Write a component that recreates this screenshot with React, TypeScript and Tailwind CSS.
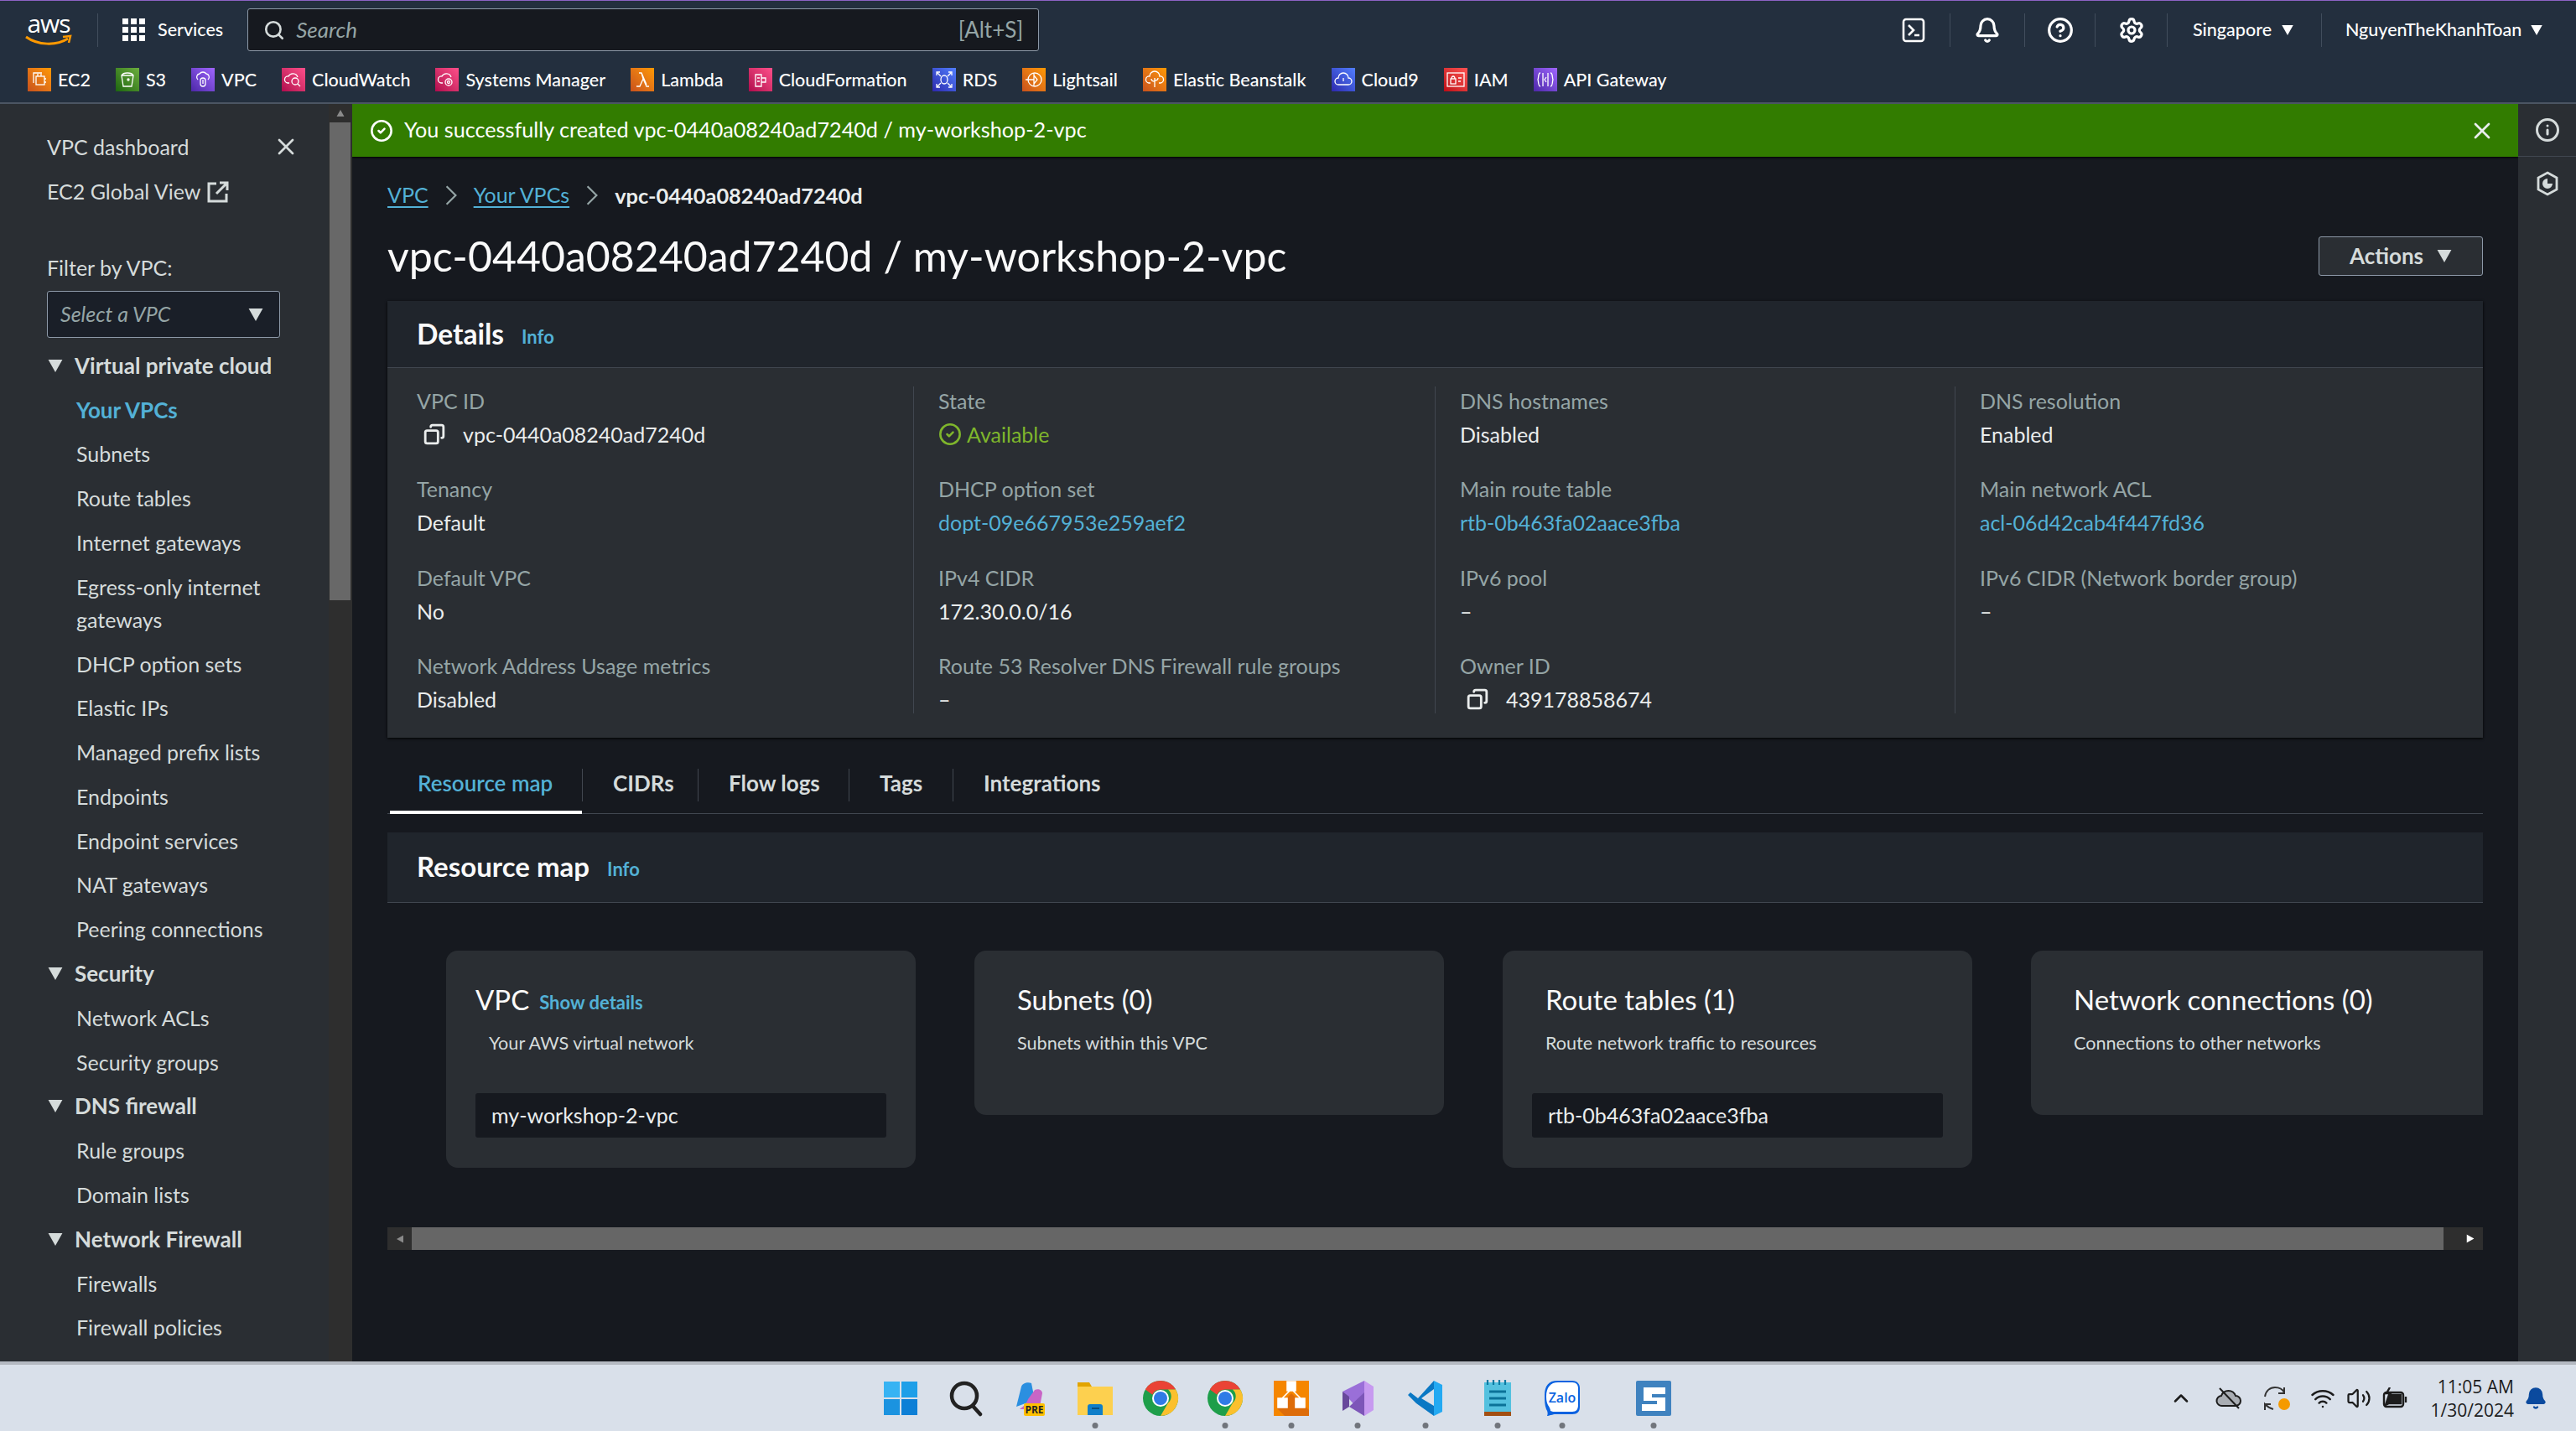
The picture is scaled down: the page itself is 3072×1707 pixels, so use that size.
import { Bell, ChevronUp, CircleCheck, CircleHelp, Copy, Info, Search, Settings, Volume2, Wifi, X } from "lucide-react";
import type { ReactNode } from "react";

function Caret({ className = "" }: { className?: string }) {
  return (
    <svg viewBox="0 0 18 16" className={className}>
      <path d="M0 0h18L9 16z" fill="currentColor" />
    </svg>
  );
}

function Svc({ bg, children }: { bg: string; children: ReactNode }) {
  return (
    <span className={`w-[28px] h-[28px] shrink-0 ${bg}`}>
      <svg viewBox="0 0 28 28" className="w-full h-full" fill="none" stroke="#fff" strokeWidth="1.3">
        {children}
      </svg>
    </span>
  );
}

const favorites: [string, string, ReactNode][] = [
  ["EC2", "bg-gradient-to-tr from-[#c8511b] to-[#ff9900]", <><rect x="10" y="10" width="10" height="10" /><path d="M7 18V6h10M12 7v3M16 7v3M22 13h-2M22 17h-2" /></>],
  ["S3", "bg-gradient-to-tr from-[#1b660f] to-[#6cae3e]", <><path d="M7 9h14l-2 13H9zM7 9c2-4 12-4 14 0" /><circle cx="15" cy="14" r="1" /></>],
  ["VPC", "bg-gradient-to-tr from-[#4d27a8] to-[#a166ff]", <><path d="M8 14a4 4 0 0 1 2-7 5 5 0 0 1 8 0 4 4 0 0 1 2 7" /><rect x="11" y="12" width="6" height="10" rx="3" /><path d="M14 14v5" /></>],
  ["CloudWatch", "bg-gradient-to-tr from-[#b0084d] to-[#ff4f8b]", <><path d="M9 18H7a4 4 0 0 1 1-8 6 6 0 0 1 11 1" /><circle cx="16" cy="16" r="4" /><path d="m19 19 3 3" /></>],
  ["Systems Manager", "bg-gradient-to-tr from-[#b0084d] to-[#ff4f8b]", <><path d="M9 18H7a4 4 0 0 1 1-8 6 6 0 0 1 11 1" /><circle cx="16" cy="17" r="4" /><circle cx="16" cy="17" r="1.5" /></>],
  ["Lambda", "bg-gradient-to-tr from-[#c8511b] to-[#ff9900]", <path d="M7 22h4l4-9 4 9h3M10 6h3l6 14M15 13l-2-7" />],
  ["CloudFormation", "bg-gradient-to-tr from-[#b0084d] to-[#ff4f8b]", <><path d="M8 8h7v14H8zM15 12h5v5h-5M10 12h3M10 16h3" /></>],
  ["RDS", "bg-gradient-to-tr from-[#2e27ad] to-[#527fff]", <><ellipse cx="14" cy="14" rx="4" ry="5" /><path d="M5 9V5h4M23 9V5h-4M5 19v4h4M23 19v4h-4M6 6l4 4M22 6l-4 4M6 22l4-4M22 22l-4-4" /></>],
  ["Lightsail", "bg-gradient-to-tr from-[#c8511b] to-[#ff9900]", <><circle cx="15" cy="14" r="8" /><path d="M14 7v14M4 14h10M14 9l4 5-4 5" /></>],
  ["Elastic Beanstalk", "bg-gradient-to-tr from-[#c8511b] to-[#ff9900]", <><path d="M9 18H7a4 4 0 0 1 1-8 6 6 0 0 1 12 0 4 4 0 0 1 1 8h-2" /><path d="M14 23V12M14 16c-3 0-4-1-4-3M14 15c3 0 4-1 4-3" /></>],
  ["Cloud9", "bg-gradient-to-tr from-[#2e27ad] to-[#527fff]", <path d="M8 20a4 4 0 0 1 0-8 6 6 0 0 1 12 0 4 4 0 0 1 0 8zM14 12v4" />],
  ["IAM", "bg-gradient-to-tr from-[#bd0816] to-[#ff5252]", <><rect x="4" y="6" width="20" height="16" /><rect x="8" y="13" width="6" height="6" /><path d="M9 13c0-4 4-4 4 0M17 12h4M17 16h3" /></>],
  ["API Gateway", "bg-gradient-to-tr from-[#4d27a8] to-[#a166ff]", <><path d="M8 6C5 6 6 12 5 14c1 2 0 8 3 8M20 6c3 0 2 6 3 8-1 2 0 8-3 8M11 6v16M17 6v16M15 11l-2 3 2 3" /></>],
];

function TopBar() {
  return (
    <header className="bg-[#232f3e] h-[122px] shrink-0 border-t-[1px] border-t-[#8c62c4] text-white">
      <div className="flex items-center h-[69px]">
        <div className="ml-[30px] w-[56px] h-[42px] relative shrink-0">
          <span className="block text-[30px] leading-[26px] tracking-[-1px] font-[500] text-white [font-family:'Open_Sans',sans-serif] text-center">aws</span>
          <svg viewBox="0 0 56 16" className="absolute left-0 bottom-0 w-[56px] h-[16px]">
            <path d="M1 3c14 10 36 11 50 2" fill="none" stroke="#ff9900" strokeWidth="3" />
            <path d="M45 3l9-1-2 8" fill="none" stroke="#ff9900" strokeWidth="2.5" />
          </svg>
        </div>
        <div className="w-[1px] h-[40px] bg-[#414d5c] ml-[30px]" />
        <svg viewBox="0 0 27 27" className="w-[27px] h-[27px] ml-[29px] text-white" fill="currentColor">
          <path d="M0 0h7v7H0zM10 0h7v7h-7zM20 0h7v7h-7zM0 10h7v7H0zM10 10h7v7h-7zM20 10h7v7h-7zM0 20h7v7H0zM10 20h7v7h-7zM20 20h7v7h-7z" />
        </svg>
        <span className="ml-[15px] text-[21.5px] font-medium">Services</span>
        <div className="ml-[29px] w-[944px] h-[51px] rounded-[3px] border-[1px] border-[#8d99a8] bg-[#16191f] flex items-center px-[18px]">
          <Search size={26} className="text-[#d5dbdb]" strokeWidth={2.4} />
          <span className="ml-[13px] text-[26px] italic text-[#95a5a6]">Search</span>
          <span className="ml-auto text-[26px] text-[#95a5a6]">[Alt+S]</span>
        </div>
        <div className="ml-auto flex items-center h-[40px] text-[21.5px] font-medium">
          <div className="w-[87px] h-full flex items-center justify-center border-r-[1px] border-[#414d5c]">
            <svg viewBox="0 0 28 30" className="w-[28px] h-[30px]" fill="none" stroke="#fff" strokeWidth="2.6">
              <rect x="2" y="2" width="24" height="26" rx="3" />
              <path d="m8 9 6 6-6 6M15 21h6" />
            </svg>
          </div>
          <div className="w-[89px] h-full flex items-center justify-center border-r-[1px] border-[#414d5c]">
            <Bell size={32} strokeWidth={2.4} />
          </div>
          <div className="w-[84px] h-full flex items-center justify-center border-r-[1px] border-[#414d5c]">
            <CircleHelp size={32} strokeWidth={2.4} />
          </div>
          <div className="w-[86px] h-full flex items-center justify-center border-r-[1px] border-[#414d5c]">
            <Settings size={32} strokeWidth={2.4} />
          </div>
          <div className="w-[184px] h-full flex items-center pl-[30px] border-r-[1px] border-[#414d5c]">
            Singapore
            <Caret className="w-[14px] h-[12px] ml-[12px]" />
          </div>
          <div className="w-[303px] h-full flex items-center pl-[28px]">
            NguyenTheKhanhToan
            <Caret className="w-[14px] h-[12px] ml-[11px]" />
          </div>
        </div>
      </div>
      <div className="flex items-center h-[50px] pl-[33px] gap-[30px] text-[21.5px] font-medium">
        {favorites.map(([name, bg, glyph]) => (
          <div key={name} className="flex items-center gap-[8px]">
            <Svc bg={bg}>{glyph}</Svc>
            <span>{name}</span>
          </div>
        ))}
      </div>
    </header>
  );
}

function NavRow({ children, active }: { children: ReactNode; active?: boolean }) {
  return (
    <div className={`pl-[91px] pr-[50px] py-[6.9px] leading-[39px] ${active ? "text-[#53b1d6] font-bold text-[26px]" : "text-[#d5dbdb]"}`}>
      {children}
    </div>
  );
}

function NavSection({ children }: { children: ReactNode }) {
  return (
    <div className="flex items-center pl-[57px] py-[6.9px] leading-[39px] text-[26px] font-bold text-[#d5dbdb]">
      <Caret className="w-[18px] h-[15px] mr-[14px]" />
      {children}
    </div>
  );
}

function Sidebar() {
  return (
    <aside className="w-[392px] shrink-0 bg-[#2a2e33] overflow-hidden text-[25px] text-[#d5dbdb]">
      <div className="pt-[25px] pl-[56px] relative">
        <div className="h-[53px] flex items-center">VPC dashboard</div>
        <X size={32} className="absolute left-[325px] top-[35px]" strokeWidth={2} />
        <div className="h-[53px] flex items-center">
          EC2 Global View
          <svg viewBox="0 0 26 26" className="w-[26px] h-[26px] ml-[8px]" fill="none" stroke="currentColor" strokeWidth="3">
            <path d="M11 3H2v21h21v-9M15 2h9v9M24 2 11 15" />
          </svg>
        </div>
        <div className="mt-[47px] leading-[34px]">Filter by VPC:</div>
        <div className="mt-[11px] w-[278px] h-[56px] border-[1px] border-[#8d99a8] rounded-[3px] bg-[#1a1f28] flex items-center px-[15px]">
          <span className="italic text-[#95a5a6]">Select a VPC</span>
          <Caret className="w-[18px] h-[15px] ml-auto mr-[4px]" />
        </div>
      </div>
      <div className="mt-[7px]">
        <NavSection>Virtual private cloud</NavSection>
        <NavRow active>Your VPCs</NavRow>
        <NavRow>Subnets</NavRow>
        <NavRow>Route tables</NavRow>
        <NavRow>Internet gateways</NavRow>
        <NavRow>Egress-only internet gateways</NavRow>
        <NavRow>DHCP option sets</NavRow>
        <NavRow>Elastic IPs</NavRow>
        <NavRow>Managed prefix lists</NavRow>
        <NavRow>Endpoints</NavRow>
        <NavRow>Endpoint services</NavRow>
        <NavRow>NAT gateways</NavRow>
        <NavRow>Peering connections</NavRow>
        <NavSection>Security</NavSection>
        <NavRow>Network ACLs</NavRow>
        <NavRow>Security groups</NavRow>
        <NavSection>DNS firewall</NavSection>
        <NavRow>Rule groups</NavRow>
        <NavRow>Domain lists</NavRow>
        <NavSection>Network Firewall</NavSection>
        <NavRow>Firewalls</NavRow>
        <NavRow>Firewall policies</NavRow>
      </div>
    </aside>
  );
}

function SideScroll() {
  return (
    <div className="w-[28px] shrink-0 bg-[#2e2e2e] flex flex-col items-center pl-[1px] pr-[2px]">
      <div className="h-[22px] flex items-center">
        <Caret className="w-[12px] h-[8px] rotate-180 text-[#8a8a8a]" />
      </div>
      <div className="w-full h-[570px] bg-[#686868]" />
    </div>
  );
}

function Field({ label, children }: { label: string; children: ReactNode }) {
  return (
    <div>
      <div className="leading-[34px] text-[#95a5a6]">{label}</div>
      <div className="leading-[34px] mt-[6px] text-[#eaeded] flex items-center">{children}</div>
    </div>
  );
}

function CopyId({ id }: { id: string }) {
  return (
    <>
      <Copy size={26} className="ml-[8px] mr-[21px] -scale-x-100" strokeWidth={2.6} />
      {id}
    </>
  );
}

function DetailCol({ children, last, first }: { children: ReactNode; last?: boolean; first?: boolean }) {
  return (
    <div className={`flex flex-col gap-[31.3px] ${first ? "" : "pl-[29px]"} ${last ? "" : "border-r-[1px] border-[#414750]"}`}>
      {children}
    </div>
  );
}

function Details() {
  return (
    <section className="bg-[#2a2e33] mt-[30px] h-[521px] shadow-[0_1px_3px_#000]">
      <div className="h-[80px] bg-[#20252c] border-b-[1px] border-[#414750] flex items-center pl-[35px]">
        <h2 className="text-[33.5px] font-bold text-[#fafafa]">Details</h2>
        <span className="ml-[21px] mt-[6px] text-[22px] font-bold text-[#53b1d6]">Info</span>
      </div>
      <div className="grid grid-cols-[593px_622px_620px_1fr] pl-[35px] mt-[22px] text-[25px]">
        <DetailCol first>
          <Field label="VPC ID"><CopyId id="vpc-0440a08240ad7240d" /></Field>
          <Field label="Tenancy">Default</Field>
          <Field label="Default VPC">No</Field>
          <Field label="Network Address Usage metrics">Disabled</Field>
        </DetailCol>
        <DetailCol>
          <Field label="State">
            <span className="flex items-center gap-[6px] text-[#7fb62c]">
              <CircleCheck size={28} strokeWidth={2.2} />
              Available
            </span>
          </Field>
          <Field label="DHCP option set"><span className="text-[#53b1d6]">dopt-09e667953e259aef2</span></Field>
          <Field label="IPv4 CIDR">172.30.0.0/16</Field>
          <Field label="Route 53 Resolver DNS Firewall rule groups">–</Field>
        </DetailCol>
        <DetailCol>
          <Field label="DNS hostnames">Disabled</Field>
          <Field label="Main route table"><span className="text-[#53b1d6]">rtb-0b463fa02aace3fba</span></Field>
          <Field label="IPv6 pool">–</Field>
          <Field label="Owner ID"><CopyId id="439178858674" /></Field>
        </DetailCol>
        <DetailCol last>
          <Field label="DNS resolution">Enabled</Field>
          <Field label="Main network ACL"><span className="text-[#53b1d6]">acl-06d42cab4f447fd36</span></Field>
          <Field label="IPv6 CIDR (Network border group)">–</Field>
        </DetailCol>
      </div>
    </section>
  );
}

function Tabs() {
  const tabs = [
    ["CIDRs", "w-[138px]"],
    ["Flow logs", "w-[180px]"],
    ["Tags", "w-[124px]"],
    ["Integrations", "w-[200px]"],
  ];
  return (
    <div className="mt-[37px] h-[54px] border-b-[1px] border-[#414750] flex text-[26px] font-bold text-[#d5dbdb]">
      <div className="ml-[3px] w-[229px] h-[54px] border-b-[4px] border-white text-[#53b1d6] pl-[33px] font-semibold">
        <span className="leading-[35px] block">Resource map</span>
      </div>
      {tabs.map(([name, w]) => (
        <div key={name} className={`${w} h-[39px] border-l-[1px] border-[#414750] pl-[36px] leading-[35px]`}>
          {name}
        </div>
      ))}
    </div>
  );
}

function MapCard({ title, extra, sub, value }: { title: string; extra?: string; sub: string; value?: string }) {
  return (
    <div className="w-[560px] shrink-0 bg-[#2a2e33] rounded-[14px] px-[35px] pt-[41px] self-start">
      <div className={`h-[36px] text-[33px] text-[#fafafa] flex items-center ${extra ? "" : "pl-[16px]"}`}>
        {title}
        {extra && <span className="ml-[12px] mt-[5px] text-[22px] leading-none font-bold text-[#53b1d6]">{extra}</span>}
      </div>
      <div className="mt-[15px] pl-[16px] text-[21.6px] leading-[36px] text-[#d5dbdb]">{sub}</div>
      {value ? (
        <div className="mt-[42px] mb-[36px] h-[53px] bg-[#16191f] rounded-[3px] flex items-center px-[19px] text-[25px] text-[#eaeded]">
          {value}
        </div>
      ) : (
        <div className="h-[68px]" />
      )}
    </div>
  );
}

function ResourceMap() {
  return (
    <section className="mt-[22px]">
      <div className="h-[84px] bg-[#20252c] border-b-[1px] border-[#414750] flex items-center pl-[35px]">
        <h2 className="text-[33px] font-bold text-[#fafafa] -mt-[2px]">Resource map</h2>
        <span className="ml-[21px] mt-[4px] text-[22px] font-bold text-[#53b1d6]">Info</span>
      </div>
      <div className="overflow-hidden flex gap-[70px] pl-[70px] pt-[57px] h-[387px]">
        <MapCard title="VPC" extra="Show details" sub="Your AWS virtual network" value="my-workshop-2-vpc" />
        <MapCard title="Subnets (0)" sub="Subnets within this VPC" />
        <MapCard title="Route tables (1)" sub="Route network traffic to resources" value="rtb-0b463fa02aace3fba" />
        <MapCard title="Network connections (0)" sub="Connections to other networks" />
      </div>
      <div className="h-[27px] flex items-stretch bg-[#2e2e2e]">
        <div className="w-[29px] flex items-center justify-center">
          <Caret className="w-[10px] h-[8px] rotate-90 text-[#8a8a8a]" />
        </div>
        <div className="flex-1 bg-[#666666]" />
        <div className="w-[47px] flex items-center justify-end pr-[9px]">
          <Caret className="w-[12px] h-[9px] -rotate-90 text-white" />
        </div>
      </div>
    </section>
  );
}

function Main() {
  return (
    <main className="flex-1 min-w-0 bg-[#16191f] overflow-hidden text-[#eaeded]">
      <div className="h-[63px] bg-[#327c00] flex items-center pl-[21px] pr-[27px] text-white shadow-[0_1px_2px_#000]">
        <CircleCheck size={28} strokeWidth={2.2} />
        <span className="ml-[13px] text-[25.2px] -mt-[1px]">You successfully created vpc-0440a08240ad7240d / my-workshop-2-vpc</span>
        <X size={32} className="ml-auto text-[#eaeded]" strokeWidth={2} />
      </div>
      <div className="pl-[42px] pr-[42px]">
        <nav className="mt-[29px] h-[34px] flex items-center text-[25px]">
          <span className="text-[#53b1d6] underline underline-offset-4">VPC</span>
          <svg viewBox="0 0 14 24" className="w-[16px] h-[26px] mx-[19px]" fill="none" stroke="#95a5a6" strokeWidth="2"><path d="m2 2 10 10L2 22" /></svg>
          <span className="text-[#53b1d6] underline underline-offset-4">Your VPCs</span>
          <svg viewBox="0 0 14 24" className="w-[16px] h-[26px] mx-[19px]" fill="none" stroke="#95a5a6" strokeWidth="2"><path d="m2 2 10 10L2 22" /></svg>
          <span className="font-bold text-[25.4px] text-[#eaeded]">vpc-0440a08240ad7240d</span>
        </nav>
        <div className="mt-[32px] h-[47px] flex items-center justify-between">
          <h1 className="text-[50px] text-[#fafafa]">vpc-0440a08240ad7240d / my-workshop-2-vpc</h1>
          <button className="w-[196px] h-[47px] bg-[#2a2e33] border-[1px] border-[#8d99a8] rounded-[3px] flex items-center justify-center text-[26px] font-bold text-[#d5dbdb]">
            Actions
            <Caret className="w-[18px] h-[15px] ml-[16px]" />
          </button>
        </div>
        <Details />
        <Tabs />
        <ResourceMap />
      </div>
    </main>
  );
}

function RightRail() {
  return (
    <div className="w-[69px] shrink-0 bg-[#2a2e33] text-[#d5dbdb]">
      <div className="h-[63px] border-b-[1px] border-[#414750] flex items-center justify-center">
        <Info size={30} strokeWidth={2.4} />
      </div>
      <div className="h-[64px] flex items-center justify-center">
        <svg viewBox="0 0 26 30" className="w-[26px] h-[30px]" fill="none" stroke="currentColor" strokeWidth="2.8">
          <path d="M13 2 24 8v14l-11 6-11-6V8z" />
          <path d="M13 9a6 6 0 1 0 6 6h-6z" fill="currentColor" stroke="none" />
        </svg>
      </div>
    </div>
  );
}

function TaskIcon({ className, dot, children }: { className: string; dot?: boolean; children: ReactNode }) {
  return (
    <div className={`relative w-[44px] h-[44px] shrink-0 ${className}`}>
      {children}
      {dot && <div className="absolute left-1/2 -translate-x-1/2 top-[51px] w-[7px] h-[7px] rounded-full bg-[#71757c]" />}
    </div>
  );
}

function Chrome() {
  return (
    <svg viewBox="0 0 44 44" className="w-full h-full">
      <circle cx="22" cy="22" r="21" fill="#1e9e4a" />
      <path d="M22 1a21 21 0 0 1 18.2 10.5H22a10.5 10.5 0 0 0-9.6 6.2L3.8 11.5A21 21 0 0 1 22 1z" fill="#ea4335" />
      <path d="M40.2 11.5A21 21 0 0 1 22 43l9-15.5a10.5 10.5 0 0 0 0-16z" fill="#fbc02d" />
      <circle cx="22" cy="22" r="10" fill="#fff" />
      <circle cx="22" cy="22" r="8" fill="#2f7be6" />
    </svg>
  );
}

function Taskbar() {
  return (
    <footer className="h-[83px] shrink-0 bg-[#d9e0ea] border-t-[4px] border-[#b4b9c1] flex items-center [font-family:'Open_Sans',sans-serif] text-[#1b1b1b]">
      <TaskIcon className="ml-[1052px]">
        <svg viewBox="0 0 44 44" className="w-full h-full">
          <path d="M2 2h19v19H2z" fill="#37b3f3" /><path d="M23 2h19v19H23z" fill="#1e9fe8" /><path d="M2 23h19v19H2z" fill="#1b93e0" /><path d="M23 23h19v19H23z" fill="#0d7fd6" />
        </svg>
      </TaskIcon>
      <TaskIcon className="ml-[34px]">
        <svg viewBox="0 0 44 44" className="w-full h-full" fill="none" stroke="#222" strokeWidth="4.5" strokeLinecap="round">
          <circle cx="20" cy="19" r="15" /><path d="m30 31 9 10" />
        </svg>
      </TaskIcon>
      <TaskIcon className="ml-[30px]">
        <svg viewBox="0 0 44 44" className="w-full h-full">
          <path d="M8 32 14 8c1-4 8-6 12-4l4 20z" fill="#2b8fe0" />
          <path d="M30 12c4-2 9 0 9 4l-3 16c-1 3-4 3-6 3H12c4-3 8-6 10-12z" fill="#c865c6" />
          <rect x="17" y="28" width="25" height="15" rx="2" fill="#ffc000" />
          <text x="29.5" y="40" textAnchor="middle" fontSize="12" fontWeight="700" fill="#222">PRE</text>
        </svg>
      </TaskIcon>
      <TaskIcon className="ml-[36px]" dot>
        <svg viewBox="0 0 44 44" className="w-full h-full">
          <path d="M1 3h14l3 5H1z" fill="#e2a400" /><path d="M1 8h42v34H1z" fill="#fdd04f" /><path d="M13 32a3 3 0 0 1 3-3h12a3 3 0 0 1 3 3v10H13z" fill="#0f7ec9" /><path d="M18 34h9" stroke="#0a4f80" strokeWidth="2" />
        </svg>
      </TaskIcon>
      <TaskIcon className="ml-[34px]"><Chrome /></TaskIcon>
      <TaskIcon className="ml-[33px]" dot><Chrome /></TaskIcon>
      <TaskIcon className="ml-[35px]" dot>
        <svg viewBox="0 0 44 44" className="w-full h-full">
          <rect x="1" y="1" width="42" height="42" fill="#f58600" />
          <path d="M22 16 43 36v7H14L5 34z" fill="#dd6c0a" />
          <path d="M17 2h10v11H17zM6 22h11v11H6zM27 22h11v11H27zM20 13l-9 9M24 13l9 9" fill="#fff" stroke="#fff" strokeWidth="1.6" />
        </svg>
      </TaskIcon>
      <TaskIcon className="ml-[35px]" dot>
        <svg viewBox="0 0 44 44" className="w-full h-full">
          <path d="M30 1 41 8v28l-11 7z" fill="#c79af0" /><path d="M30 1v42L4 14z" fill="#9a6fd8" /><path d="M4 14 12 20v12l-8 5z" fill="#68489b" /><path d="M30 15 12 32l18 11z" fill="#7d56b8" />
        </svg>
      </TaskIcon>
      <TaskIcon className="ml-[37px]" dot>
        <svg viewBox="0 0 44 44" className="w-full h-full">
          <path d="M32 1 42 6v32l-10 5z" fill="#23a9f2" /><path d="M32 1 13 22 4 15l-3 3 10 10L32 43V31L17 22 32 11z" fill="#0a78c4" />
        </svg>
      </TaskIcon>
      <TaskIcon className="ml-[42px]" dot>
        <svg viewBox="0 0 44 44" className="w-full h-full">
          <rect x="6" y="3" width="32" height="35" fill="#54c1df" /><rect x="6" y="38" width="32" height="5" fill="#a34f12" />
          <path d="M10 0v6M17 0v6M24 0v6M31 0v6" stroke="#0a7aa3" strokeWidth="2.2" /><path d="M12 14h20M12 22h20M12 30h20" stroke="#0b7298" strokeWidth="3" />
        </svg>
      </TaskIcon>
      <TaskIcon className="ml-[33px]" dot>
        <svg viewBox="0 0 44 44" className="w-full h-full">
          <path d="M16 1h18c6 0 9 4 9 9v22c0 6-3 9-9 9H14c-3 0-8 2-10 2 1-2 1-5-1-8C1 30 1 25 1 18 1 7 6 1 16 1z" fill="#0b62e0" />
          <path d="M17 3h17c5 0 7 3 7 7v20c0 5-2 8-7 8H14c-2 0-4 0-6-1 0-2-1-4-3-7-1-2-2-5-2-10C3 9 8 3 17 3z" fill="#fff" />
          <text x="22" y="27" textAnchor="middle" fontSize="16" fontWeight="600" fill="#0b62e0">Zalo</text>
        </svg>
      </TaskIcon>
      <TaskIcon className="ml-[65px]" dot>
        <svg viewBox="0 0 44 44" className="w-full h-full">
          <rect x="1" y="1" width="42" height="42" rx="2" fill="#3f82bf" />
          <path d="M10 9h26v8H20v4h16v16H8v-8h18v-4H10z" fill="#fff" />
        </svg>
      </TaskIcon>
      <div className="ml-auto flex items-center h-full relative text-[#1c1c1c]">
        <ChevronUp size={28} strokeWidth={2.2} className="mr-[27px]" />
        <svg viewBox="0 0 32 26" className="w-[32px] h-[26px] mr-[24px]">
          <path d="M8 22a6 6 0 0 1-1-12 9 9 0 0 1 17 0 6 6 0 0 1 0 12z" fill="#a9adb3" stroke="#1c1c1c" strokeWidth="2" />
          <path d="M5 1l23 24" stroke="#1c1c1c" strokeWidth="2" />
        </svg>
        <div className="relative w-[30px] h-[30px] mr-[27px]">
          <svg viewBox="0 0 30 30" className="w-full h-full" fill="none" stroke="#333" strokeWidth="2">
            <path d="M3 13C4 6 9 2 15 2c5 0 9 2 11 6M26 2v7h-7M3 22h7M3 29v-7c3 3 6 5 10 6" />
          </svg>
          <div className="absolute right-[-3px] bottom-[1px] w-[14px] h-[14px] rounded-full bg-[#f59a00]" />
        </div>
        <Wifi size={30} strokeWidth={2} className="mr-[13px]" />
        <Volume2 size={30} strokeWidth={1.8} className="mr-[13px]" />
        <svg viewBox="0 0 30 26" className="w-[30px] h-[26px] mr-[28px]" fill="none" stroke="#1c1c1c" strokeWidth="2.4">
          <rect x="2" y="6" width="23" height="17" rx="3" /><path d="M28 11v7" /><path d="M4 21 8 9h14v10H8z" fill="#1c1c1c" /><path d="M9 0 5 7h5l-3 6" />
        </svg>
        <div className="text-right text-[21px] leading-[28px] mr-[12px]">
          <div>11:05 AM</div>
          <div>1/30/2024</div>
        </div>
        <Bell size={28} fill="#0b4a9e" stroke="#0b4a9e" className="mr-[34px]" />
      </div>
    </footer>
  );
}

export default function App() {
  return (
    <div className="w-[3072px] h-[1707px] flex flex-col overflow-hidden bg-[#16191f] [font-family:Lato,sans-serif]">
      <TopBar />
      <div className="h-[2px] shrink-0 bg-[#4b5563]" />
      <div className="flex-1 min-h-0 flex">
        <Sidebar />
        <SideScroll />
        <Main />
        <RightRail />
      </div>
      <Taskbar />
    </div>
  );
}
